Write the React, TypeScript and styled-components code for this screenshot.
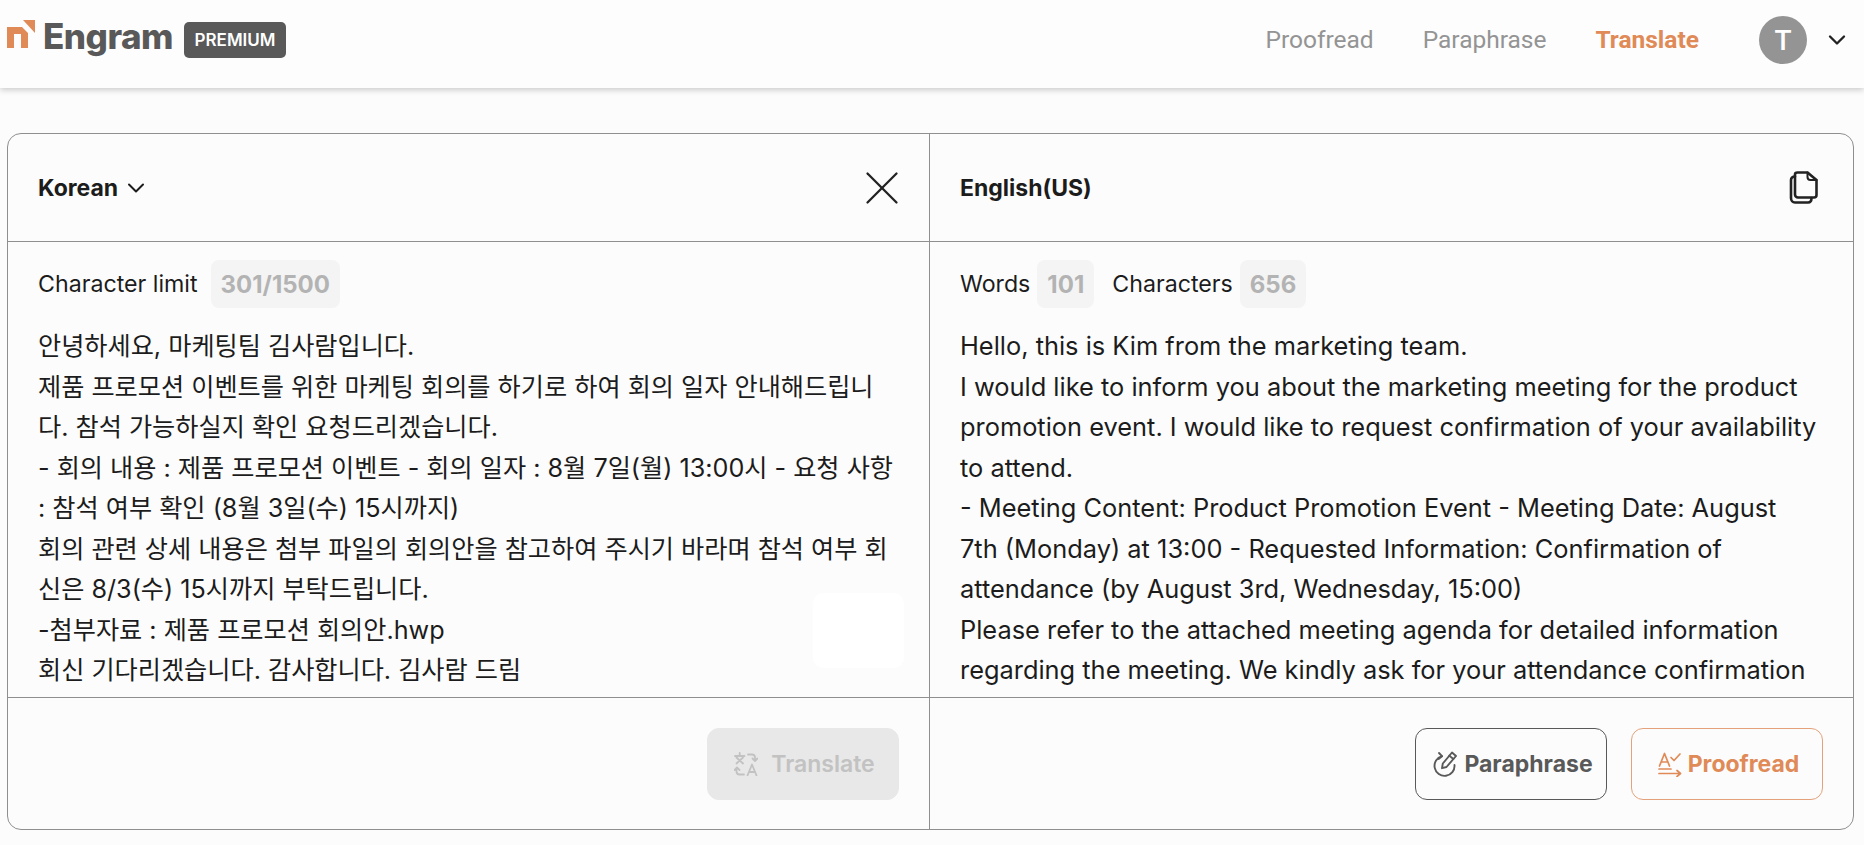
import React from 'react';
import styled, { createGlobalStyle } from 'styled-components';
import { ChevronDown, X } from 'lucide-react';

const GlobalStyle = createGlobalStyle`
  html, body {
    margin: 0;
    height: 100%;
    background: #fcfcfc;
    font-family: Inter, "Noto Sans CJK KR", sans-serif;
    overflow: hidden;
  }
  * { box-sizing: border-box; }
`;

const Page = styled.div`
  height: 845px;
  display: flex;
  flex-direction: column;
`;

const TopBar = styled.header`
  height: 88px;
  flex: none;
  display: flex;
  align-items: center;
  justify-content: space-between;
  padding: 0 13px 8px 7px;
  background: #fdfdfd;
  box-shadow: 0 2px 6px rgba(0, 0, 0, 0.2);
`;

const Brand = styled.div`
  display: flex;
  align-items: center;
`;

const LogoBox = styled.span`
  display: flex;
  margin-bottom: 12px;
`;

const Wordmark = styled.span`
  margin: 0 0 8px 7px;
  font-size: 35px;
  font-weight: 800;
  letter-spacing: -0.5px;
  color: #595959;
`;

const PremiumBadge = styled.span`
  margin-left: 11px;
  width: 102px;
  height: 36px;
  display: flex;
  align-items: center;
  justify-content: center;
  border-radius: 5px;
  background: #595959;
  color: #fff;
  font-size: 17px;
  font-weight: 600;
`;

const Nav = styled.nav`
  display: flex;
  align-items: center;
`;

const NavLink = styled.a<{ $active?: boolean }>`
  margin: 0 49px 2px 0;
  font-family: Roboto, sans-serif;
  font-size: 24.5px;
  font-weight: ${p => (p.$active ? 700 : 400)};
  color: ${p => (p.$active ? '#e08a57' : '#949494')};
`;

const Avatar = styled.div`
  width: 48px;
  height: 48px;
  margin-left: 11px;
  border-radius: 50%;
  background: #949494;
  color: #fff;
  display: flex;
  align-items: center;
  justify-content: center;
  font-family: Roboto, sans-serif;
  font-size: 28px;
  font-weight: 500;
`;

const UserCaret = styled(ChevronDown)`
  margin-left: 16px;
  color: #222;
`;

const Main = styled.main`
  padding: 45px 10px 0 7px;
`;

const Card = styled.section`
  height: 697px;
  display: grid;
  grid-template-columns: 921px 1fr;
  border: 1px solid #8f8f8f;
  border-radius: 14px;
`;

const Panel = styled.div<{ $divided?: boolean }>`
  display: flex;
  flex-direction: column;
  min-height: 0;
  position: relative;
  border-left: ${p => (p.$divided ? '1px solid #8f8f8f' : 'none')};
`;

const PanelHead = styled.div`
  height: 108px;
  flex: none;
  display: flex;
  align-items: center;
  justify-content: space-between;
  padding: 0 30px;
  border-bottom: 1px solid #8f8f8f;
`;

const LangPicker = styled.div`
  display: flex;
  align-items: center;
  gap: 4px;
  font-size: 23px;
  font-weight: 700;
  color: #1c1c1c;
`;

const HeadIcon = styled.span<{ $shift: number }>`
  display: flex;
  margin-right: ${p => p.$shift}px;
`;

const PanelBody = styled.div`
  flex: 1;
  min-height: 0;
  overflow: hidden;
  padding: 18px 30px 0;
`;

const StatRow = styled.div`
  height: 48px;
  display: flex;
  align-items: center;
  font-size: 23.2px;
  color: #1c1c1c;
`;

const StatLabel = styled.span<{ $gap: number }>`
  margin-right: ${p => p.$gap}px;
  &:not(:first-child) { margin-left: 18px; }
`;

const StatChip = styled.span`
  height: 48px;
  padding: 0 10px;
  display: flex;
  align-items: center;
  border-radius: 8px;
  background: #f4f4f4;
  color: #b3b3b3;
  font-size: 24px;
  font-weight: 700;
`;

const BodyText = styled.div<{ $size: number; $inset: number }>`
  margin-top: 18px;
  padding-right: ${p => p.$inset}px;
  font-size: ${p => p.$size}px;
  line-height: 40.5px;
  color: #1c1c1c;
  white-space: pre-line;
`;

const WhitePatch = styled.div`
  position: absolute;
  left: 805px;
  top: 459px;
  width: 91px;
  height: 75px;
  border-radius: 10px;
  background: #fff;
`;

const PanelFoot = styled.div`
  height: 132px;
  flex: none;
  display: flex;
  justify-content: flex-end;
  gap: 24px;
  padding: 30px 30px 0;
  border-top: 1px solid #8f8f8f;
`;

const ActionButton = styled.button<{ $variant: 'disabled' | 'dark' | 'accent' }>`
  width: 192px;
  height: 72px;
  display: flex;
  align-items: center;
  justify-content: center;
  gap: ${p => (p.$variant === 'disabled' ? 13 : 6)}px;
  padding: 0 0 0 3px;
  border-radius: 12px;
  font-family: inherit;
  font-size: 23px;
  font-weight: ${p => (p.$variant === 'disabled' ? 600 : 700)};
  background: ${p => (p.$variant === 'disabled' ? '#e8e8e8' : 'transparent')};
  color: ${p =>
    p.$variant === 'disabled' ? '#c2c2c2' : p.$variant === 'dark' ? '#595959' : '#e08a57'};
  border: 1px solid
    ${p =>
      p.$variant === 'disabled' ? '#e8e8e8' : p.$variant === 'dark' ? '#595959' : '#e3a27b'};
`;

const LogoMark = () => (
  <svg width="29" height="28" viewBox="0 0 29 28">
    <path d="M0 7h15l6 6v15h-7V14H7v14H0z" fill="#e08a57" />
    <path d="M16 0h12v13z" fill="#e08a57" />
  </svg>
);

const CopyIcon = () => (
  <svg width="30" height="33" viewBox="0 0 30 33" fill="none" stroke="#222" strokeWidth="2.6" strokeLinejoin="round" strokeLinecap="round">
    <path d="M6 3.5C6 2.5 7 1.5 8.5 1.5h10L27.5 9v15c0 1.5-1 2.5-2.5 2.5H9c-1.7 0-3-1.2-3-3z" />
    <path d="M18.5 1.5V6c0 2 1.2 3 3 3h6" strokeWidth="2" />
    <path d="M6 5.5C3.5 5.5 2 7 2 9v18c0 2.6 1.6 4.5 4 4.5h13c2 0 3.5-1.5 3.5-4.5" />
  </svg>
);

const TranslateIcon = () => (
  <svg width="24" height="24" viewBox="0 0 24 24" fill="none" stroke="#c2c2c2" strokeWidth="1.8" strokeLinecap="round" strokeLinejoin="round">
    <path d="M1 4h9.5M5.7 1v3M2.5 5.5l6.5 6M9 5.5l-6.5 6" />
    <path d="M14 2.5h4c2 0 3 1 3 3v3M18.5 6.5L21 9l2.5-2.5" />
    <path d="M10 22.5H5.5c-2 0-3-1-3-3v-3.5M0.5 18l2.5-2.5L5.5 18" />
    <path d="M13.5 23.5l4.5-11 4.5 11M15 20h6" />
  </svg>
);

const ParaphraseIcon = () => (
  <svg width="26" height="26" viewBox="0 0 26 26" fill="none" stroke="#595959" strokeWidth="1.9" strokeLinecap="round" strokeLinejoin="round">
    <path d="M10 5.2A10 10 0 1 0 22.5 14" />
    <path d="M7 2l3 3.2L6.6 8" />
    <path d="M20 1.5l4 3.5-9.5 11-4.5 1.2 0.8-4.7z" />
    <path d="M17.3 4.6l4 3.4" />
  </svg>
);

const ProofreadIcon = () => (
  <svg width="24" height="26" viewBox="0 0 24 26" fill="none" stroke="#e08a57" strokeWidth="1.7" strokeLinecap="round" strokeLinejoin="round">
    <path d="M1.5 15L6.5 2.5l5 12.5M3.2 11h6.6" />
    <path d="M13 6.5l3 3 6-6.5" />
    <path d="M1 18h12" />
    <path d="M1 22.5h21M19 19.5l3.5 3-3.5 3" />
  </svg>
);

export default function App() {
  return (
    <Page>
      <GlobalStyle />
      <TopBar>
        <Brand>
          <LogoBox>
            <LogoMark />
          </LogoBox>
          <Wordmark>Engram</Wordmark>
          <PremiumBadge>PREMIUM</PremiumBadge>
        </Brand>
        <Nav>
          <NavLink>Proofread</NavLink>
          <NavLink>Paraphrase</NavLink>
          <NavLink $active>Translate</NavLink>
          <Avatar>T</Avatar>
          <UserCaret size={28} strokeWidth={2} />
        </Nav>
      </TopBar>
      <Main>
        <Card>
          <Panel>
            <PanelHead>
              <LangPicker>
                Korean
                <ChevronDown size={28} strokeWidth={1.7} />
              </LangPicker>
              <HeadIcon $shift={-12}>
                <X size={58} strokeWidth={0.95} color="#222" />
              </HeadIcon>
            </PanelHead>
            <PanelBody>
              <StatRow>
                <StatLabel $gap={13}>Character limit</StatLabel>
                <StatChip>301/1500</StatChip>
              </StatRow>
              <BodyText $size={25.2} $inset={0}>{`안녕하세요, 마케팅팀 김사람입니다.
제품 프로모션 이벤트를 위한 마케팅 회의를 하기로 하여 회의 일자 안내해드립니다. 참석 가능하실지 확인 요청드리겠습니다.
- 회의 내용 : 제품 프로모션 이벤트 - 회의 일자 : 8월 7일(월) 13:00시 - 요청 사항 : 참석 여부 확인 (8월 3일(수) 15시까지)
회의 관련 상세 내용은 첨부 파일의 회의안을 참고하여 주시기 바라며 참석 여부 회신은 8/3(수) 15시까지 부탁드립니다.
-첨부자료 : 제품 프로모션 회의안.hwp
회신 기다리겠습니다. 감사합니다. 김사람 드림`}</BodyText>
            </PanelBody>
            <WhitePatch />
            <PanelFoot>
              <ActionButton $variant="disabled">
                <TranslateIcon />
                Translate
              </ActionButton>
            </PanelFoot>
          </Panel>
          <Panel $divided>
            <PanelHead>
              <LangPicker>English(US)</LangPicker>
              <HeadIcon $shift={4}>
                <CopyIcon />
              </HeadIcon>
            </PanelHead>
            <PanelBody>
              <StatRow>
                <StatLabel $gap={7}>Words</StatLabel>
                <StatChip>101</StatChip>
                <StatLabel $gap={7}>Characters</StatLabel>
                <StatChip>656</StatChip>
              </StatRow>
              <BodyText $size={25.4} $inset={6}>{`Hello, this is Kim from the marketing team.
I would like to inform you about the marketing meeting for the product promotion event. I would like to request confirmation of your availability to attend.
- Meeting Content: Product Promotion Event - Meeting Date: August 7th (Monday) at 13:00 - Requested Information: Confirmation of attendance (by August 3rd, Wednesday, 15:00)
Please refer to the attached meeting agenda for detailed information regarding the meeting. We kindly ask for your attendance confirmation`}</BodyText>
            </PanelBody>
            <PanelFoot>
              <ActionButton $variant="dark">
                <ParaphraseIcon />
                Paraphrase
              </ActionButton>
              <ActionButton $variant="accent">
                <ProofreadIcon />
                Proofread
              </ActionButton>
            </PanelFoot>
          </Panel>
        </Card>
      </Main>
    </Page>
  );
}
